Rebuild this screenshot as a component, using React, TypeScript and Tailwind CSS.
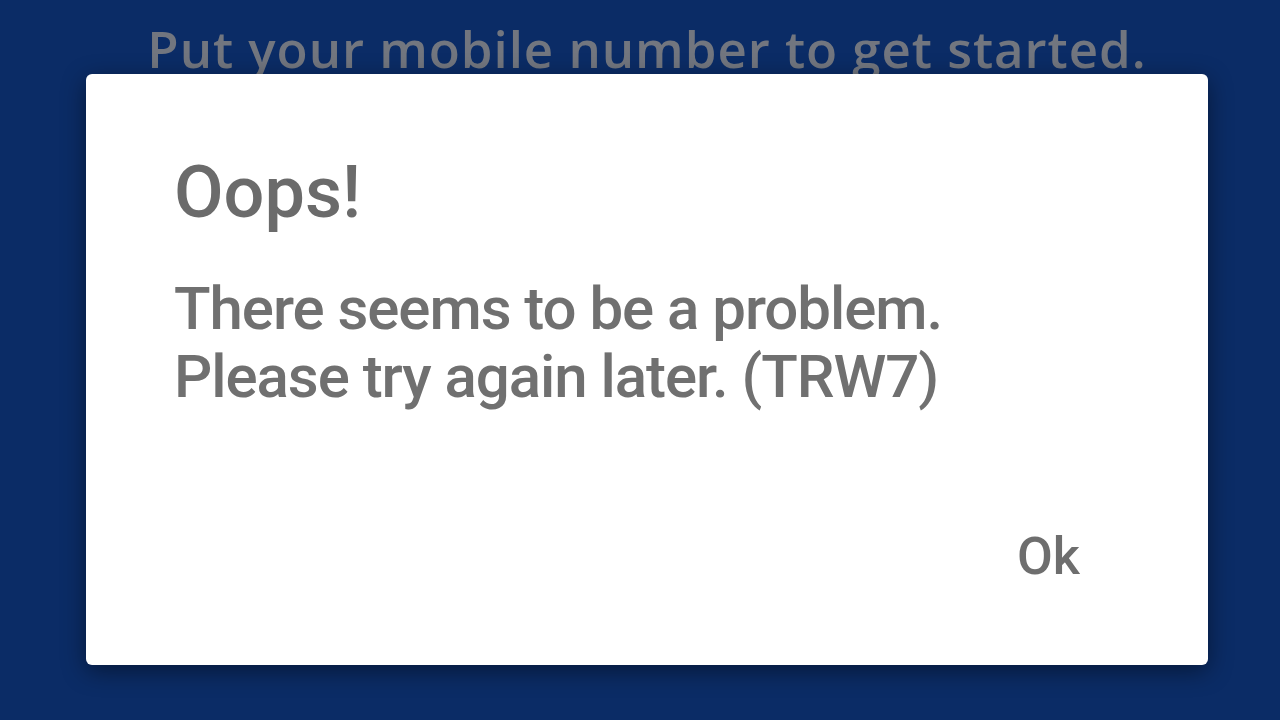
export default function App() {
  return (
    <div className="relative h-[720px] w-[1280px] overflow-hidden bg-[#0b2c66]">
      <p
        className="pl-[14px] pt-[18px] text-center text-[51px] font-semibold leading-[60px] tracking-[0.95px] text-[#72767f]"
        style={{ fontFamily: '"Open Sans", "Noto Sans", sans-serif' }}
      >
        Put your mobile number to get started.
      </p>

      <div
        className="absolute left-[86px] top-[74px] flex h-[591px] w-[1122px] flex-col rounded-[6px] bg-white shadow-[0_6px_24px_rgba(0,0,0,0.45)]"
        style={{ fontFamily: 'Roboto, "Noto Sans", sans-serif' }}
      >
        <div className="flex flex-col pl-[88px] pt-[83px]">
          <h1 className="text-[72px] font-medium leading-[72px] text-[#6b6b6b]">Oops!</h1>
          <p className="mt-[46px] text-[60px] font-medium leading-[68px] tracking-[-1.05px] text-[#707070]">
            There seems to be a problem.
            <br />
            Please try again later. (TRW7)
          </p>
        </div>
        <div className="mt-auto flex justify-end pb-[82px] pr-[128px]">
          <button className="text-[52px] font-medium leading-[52px] text-[#6e6e6e]">Ok</button>
        </div>
      </div>
    </div>
  );
}
